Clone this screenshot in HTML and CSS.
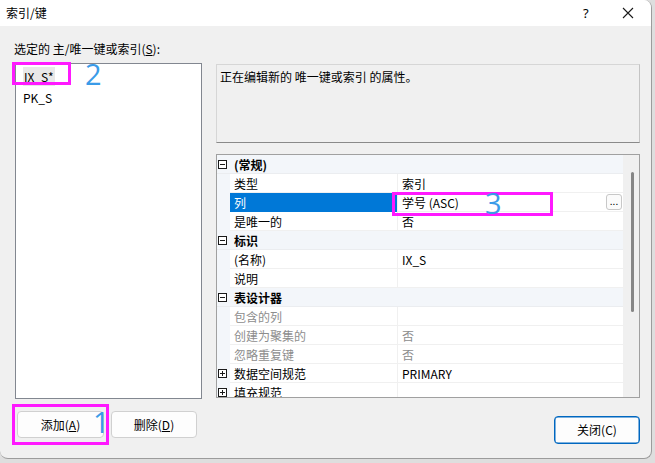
FILE: index.html
```html
<!DOCTYPE html>
<html lang="zh-CN">
<head>
<meta charset="utf-8">
<title>索引/键</title>
<link rel="stylesheet" href="styles.css">
</head>
<body>
<div class="dialog">
  <div class="titlebar">
    <span class="title">索引/键</span>
    <span class="tb-help">?</span>
    <span class="tb-close">
      <svg width="12" height="12" viewBox="0 0 12 12"><path d="M1 1L11 11M11 1L1 11" stroke="#1a1a1a" stroke-width="1.1" fill="none"/></svg>
    </span>
  </div>
  <div class="content">
    <div class="left">
      <div class="label">选定的 主/唯一键或索引(<u>S</u>):</div>
      <div class="listbox">
        <div class="item"><span class="sel">IX_S*</span></div>
        <div class="item">PK_S</div>
      </div>
      <div class="btnrow">
        <button class="btn btn-add">添加(<u>A</u>)</button>
        <button class="btn btn-del">删除(<u>D</u>)</button>
      </div>
    </div>
    <div class="right">
      <div class="desc">正在编辑新的 唯一键或索引 的属性。</div>
      <div class="grid">
        <div class="rows">
          <div class="row cat"><span class="gut"><span class="box minus"></span></span><span class="cname">(常规)</span></div>
          <div class="row"><span class="gut"></span><span class="name">类型</span><span class="val">索引</span></div>
          <div class="row selrow"><span class="gut"></span><span class="name">列</span><span class="val">学号 (ASC)<span class="dots">...</span></span></div>
          <div class="row"><span class="gut"></span><span class="name">是唯一的</span><span class="val">否</span></div>
          <div class="row cat"><span class="gut"><span class="box minus"></span></span><span class="cname">标识</span></div>
          <div class="row"><span class="gut"></span><span class="name">(名称)</span><span class="val">IX_S</span></div>
          <div class="row"><span class="gut"></span><span class="name">说明</span><span class="val"></span></div>
          <div class="row cat"><span class="gut"><span class="box minus"></span></span><span class="cname">表设计器</span></div>
          <div class="row dis"><span class="gut"></span><span class="name">包含的列</span><span class="val"></span></div>
          <div class="row dis"><span class="gut"></span><span class="name">创建为聚集的</span><span class="val">否</span></div>
          <div class="row dis"><span class="gut"></span><span class="name">忽略重复键</span><span class="val">否</span></div>
          <div class="row"><span class="gut"><span class="box plus"></span></span><span class="name">数据空间规范</span><span class="val">PRIMARY</span></div>
          <div class="row"><span class="gut"><span class="box plus"></span></span><span class="name">填充规范</span><span class="val"></span></div>
        </div>
        <div class="scroll"><div class="thumb"></div></div>
      </div>
      <div class="closerow">
        <button class="btn btn-close">关闭(C)</button>
      </div>
    </div>
  </div>
  <div class="mark mark-2"></div>
  <div class="num num-2">2</div>
  <div class="mark mark-3"></div>
  <div class="num num-3">3</div>
  <div class="mark mark-1"></div>
  <div class="num num-1">1</div>
</div>
</body>
</html>
```
FILE: styles.css
```css
* { box-sizing: border-box; }
html, body { margin: 0; padding: 0; }
body {
  width: 655px;
  height: 463px;
  background: #dedede;
  font-family: "Noto Sans CJK SC", "Noto Sans", sans-serif;
  font-size: 12px;
  color: #000;
  overflow: hidden;
}
.dialog {
  position: relative;
  width: 652px;
  height: 459px;
  background: #f0f0f0;
  border-right: 1px solid #9c9c9c;
  border-bottom: 1px solid #9c9c9c;
  border-radius: 0 8px 8px 8px;
  overflow: hidden;
  display: flex;
  flex-direction: column;
}
.titlebar {
  height: 26px;
  background: #fff;
  display: flex;
  align-items: center;
  flex: none;
}
.title { padding-left: 6px; line-height: 16px; flex: 1; }
.tb-help { width: 14px; margin-right: 25px; font-family: "Noto Sans", sans-serif; font-size: 13px; line-height: 16px; }
.tb-close { width: 12px; height: 12px; margin-right: 17px; display: flex; }
.content {
  flex: 1;
  display: flex;
  padding: 15px 0 0 15px;
}
.left { width: 187px; display: flex; flex-direction: column; }
.label { line-height: 16px; height: 16px; margin-left: -1px; white-space: nowrap; }
.listbox {
  margin-top: 6px;
  height: 336px;
  background: #fff;
  border: 1px solid #828790;
  padding-top: 2px;
}
.item { height: 21px; line-height: 21px; padding-left: 7px; }
.sel { background: #e8e8e8; padding: 1px 1px 1px 1px; line-height: 15px; }
.btnrow { margin-top: 12px; margin-left: 2px; display: flex; gap: 7px; }
.btn {
  font-family: inherit;
  font-size: 12px;
  color: #000;
  background: #fdfdfd;
  border: 1px solid #d0d0d0;
  border-radius: 4px;
  height: 27px;
  padding: 0;
  line-height: 25px;
}
.btn-add { width: 87px; }
.btn-del { width: 86px; }
.right { width: 424px; margin-left: 14px; display: flex; flex-direction: column; padding-top: 23px; }
.desc {
  height: 79px;
  border: 1px solid #d6d6d6;
  border-bottom-color: #8a8a8a;
  border-right-color: #c4c4c4;
  padding: 3px 0 0 3px;
  line-height: 17px;
  background: #f0f0f0;
}
.grid {
  margin-top: 11px;
  height: 244px;
  border: 1px solid #a0a0a0;
  background: #fff;
  display: flex;
  overflow: hidden;
}
.rows { flex: 1; display: flex; flex-direction: column; }
.row { height: 19px; flex: none; display: flex; line-height: 19px; }
.gut { width: 13px; flex: none; background: #f3f6fa; position: relative; }
.name { width: 167px; flex: none; padding-left: 4px; border-bottom: 1px solid #f0f0f0; white-space: nowrap; }
.val { flex: 1; padding-left: 4px; border-left: 1px solid #f0f0f0; border-bottom: 1px solid #f0f0f0; white-space: nowrap; position: relative; }
.cat { background: #f3f6fa; border-bottom: 1px solid #ebedf0; }
.cname { padding-left: 4px; font-weight: bold; }
.selrow .name { background: #0078d7; color: #fff; border-bottom-color: #0078d7; }
.dis .name, .dis .val { color: #8d8d8d; }
.box {
  position: absolute;
  left: 1px;
  top: 5px;
  width: 9px;
  height: 9px;
  border: 1px solid #1a1a1a;
  background: #fff;
}
.box::before {
  content: "";
  position: absolute;
  left: 1px; top: 3px;
  width: 5px; height: 1px;
  background: #1a1a1a;
}
.plus::after {
  content: "";
  position: absolute;
  left: 3px; top: 1px;
  width: 1px; height: 5px;
  background: #1a1a1a;
}
.dots {
  position: absolute;
  right: 1px;
  top: 1px;
  width: 16px;
  height: 16px;
  border: 1px solid #c8c8c8;
  border-radius: 3px;
  background: #fbfbfb;
  font-size: 10px;
  line-height: 12px;
  text-align: center;
  color: #000;
}
.scroll { width: 16px; flex: none; background: #f0f0f0; position: relative; }
.thumb {
  position: absolute;
  left: 8px;
  top: 17px;
  width: 3px;
  height: 140px;
  border-radius: 2px;
  background: #868686;
}
.closerow { display: flex; justify-content: flex-end; margin-top: 18px; }
.btn-close {
  width: 86px;
  height: 28px;
  border: 1px solid #0067c0;
  box-shadow: inset 0 0 0 0.5px #0067c0;
  line-height: 26px;
}
.mark {
  position: absolute;
  border: 3px solid #ff19ff;
}
.mark-2 { left: 12px; top: 62px; width: 59px; height: 23px; }
.mark-3 { left: 392px; top: 192px; width: 161px; height: 24px; }
.mark-1 { left: 12px; top: 404px; width: 97px; height: 41px; }
.num {
  position: absolute;
  color: #3a9be8;
  font-family: "Open Sans", "Noto Sans", sans-serif;
  font-size: 29px;
  line-height: 30px;
}
.num-2 { left: 85px; top: 59px; }
.num-3 { left: 485px; top: 188px; }
.num-1 { left: 93px; top: 407px; }
```
